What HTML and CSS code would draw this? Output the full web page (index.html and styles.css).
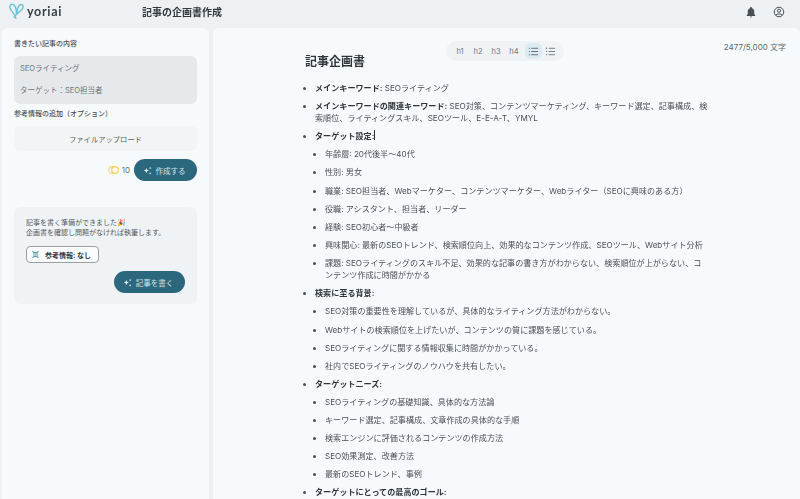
FILE: index.html
```html
<!DOCTYPE html>
<html lang="ja">
<head>
<meta charset="utf-8">
<title>記事の企画書作成</title>
<link rel="stylesheet" href="styles.css">
</head>
<body>
<header class="topbar">
  <div class="brand">
    <svg class="logo" viewBox="0 0 20 20" width="15" height="16" preserveAspectRatio="none"><path d="M9 19C8.500 14 2 10 1.200 5.500C.7 2.500 3.500 .5 6 2C9 4 10 9 10 14C10.500 9 12 4 15 2.200C17.500 .9 19.500 3 18.500 6C17 10.500 10 12.500 7 17.500" fill="none" stroke="#6cc3d5" stroke-width="1.900" stroke-linecap="round"/></svg>
    <span class="brand-name">yoriai</span>
  </div>
  <h1 class="page-title">記事の企画書作成</h1>
  <div class="top-icons">
    <svg viewBox="0 0 24 24" width="12" height="12"><path d="M12 2a2 2 0 0 0-2 2v.600C7 5.500 5.500 8 5.500 11v5L3.500 18.500V20h17v-1.500L18.500 16v-5c0-3-1.500-5.500-4.500-6.400V4a2 2 0 0 0-2-2zM10 21a2 2 0 0 0 4 0z" fill="#4a4f54"/></svg>
    <svg viewBox="0 0 24 24" width="12" height="12"><circle cx="12" cy="12" r="9.500" fill="none" stroke="#4a4f54" stroke-width="2"/><circle cx="12" cy="9.500" r="3.200" fill="none" stroke="#4a4f54" stroke-width="2"/><path d="M5.500 18.500c2-3.500 11-3.500 13 0" fill="none" stroke="#4a4f54" stroke-width="2"/></svg>
  </div>
</header>
<main class="workspace">
  <aside class="side">
    <div class="label">書きたい記事の内容</div>
    <div class="textarea">
      <p>SEOライティング</p>
      <p>ターゲット：SEO担当者</p>
    </div>
    <div class="label label-second">参考情報の追加（オプション）</div>
    <div class="upload">ファイルアップロード</div>
    <div class="action-row">
      <span class="credits">
        <svg viewBox="0 0 16 12" width="12" height="10"><circle cx="5.500" cy="6" r="4.500" fill="none" stroke="#f6d878" stroke-width="1.400"/><circle cx="9.500" cy="6" r="4.500" fill="#fbfaf0" stroke="#f4cf5c" stroke-width="1.600"/></svg>
        10
      </span>
      <button class="btn btn-create">
        <svg class="sparkle" viewBox="0 0 12 12" width="9" height="9"><path d="M4.500 2.500l1 2.500 2.500 1-2.500 1-1 2.500-1-2.500L1 6l2.500-1zM9.500 1l.5 1.200 1.200.5-1.200.5-.5 1.200L9 3.200l-1.200-.5L9 2.200zM9.500 8l.5 1.200 1.200.5-1.200.5-.5 1.200-.5-1.200-1.200-.5 1.200-.5z" fill="#e4eff2"/></svg>
        作成する
      </button>
    </div>
    <section class="ready">
      <p class="ready-text">記事を書く準備ができました🎉<br>企画書を確認し問題がなければ執筆します。</p>
      <div class="chip">
        <svg viewBox="0 0 12 12" width="9" height="9"><path d="M2 1.500L4 3.500H8L10 1.500M2 10.500L4 8.500H8L10 10.500M4 3.500V8.500M8 3.500V8.500" fill="none" stroke="#5d98a8" stroke-width="1.500"/><rect x="4" y="4" width="4" height="4" fill="#a9cdd6"/></svg>
        <b>参考情報: なし</b>
      </div>
      <div class="ready-action">
        <button class="btn btn-write">
          <svg class="sparkle" viewBox="0 0 12 12" width="9" height="9"><path d="M4.500 2.500l1 2.500 2.500 1-2.500 1-1 2.500-1-2.500L1 6l2.500-1zM9.500 1l.5 1.200 1.200.5-1.200.5-.5 1.200L9 3.200l-1.200-.5L9 2.200zM9.500 8l.5 1.200 1.200.5-1.200.5-.5 1.200-.5-1.200-1.200-.5 1.200-.5z" fill="#e4eff2"/></svg>
          記事を書く
        </button>
      </div>
    </section>
  </aside>
  <section class="doc">
    <div class="toolbar">
      <span>h1</span><span>h2</span><span>h3</span><span>h4</span>
      <span class="tool active"><svg viewBox="0 0 12 12" width="11" height="11"><path d="M3.500 2.500H11M3.500 6H11M3.500 9.500H11" stroke="#5b6a73" stroke-width="1"/><path d="M1 2.500H2.200M1 6H2.200M1 9.500H2.200" stroke="#5b6a73" stroke-width="1"/></svg></span>
      <span class="tool"><svg viewBox="0 0 12 12" width="11" height="11"><path d="M4 2.500H11M4 6H11M4 9.500H11" stroke="#6f7880" stroke-width="1"/><path d="M1.500 1.500V3.500M1 6H2.500M1 9.500H2.500" stroke="#6f7880" stroke-width="1"/></svg></span>
    </div>
    <div class="count">2477/5,000 文字</div>
    <article class="body">
      <h2>記事企画書</h2>
      <ul class="outer">
        <li><b>メインキーワード:</b> SEOライティング</li>
        <li><b>メインキーワードの関連キーワード:</b> SEO対策、コンテンツマーケティング、キーワード選定、記事構成、検索順位、ライティングスキル、SEOツール、E-E-A-T、YMYL</li>
        <li><b>ターゲット設定:</b><span class="caret"></span>
          <ul>
            <li>年齢層: 20代後半～40代</li>
            <li>性別: 男女</li>
            <li>職業: SEO担当者、Webマーケター、コンテンツマーケター、Webライター（SEOに興味のある方）</li>
            <li>役職: アシスタント、担当者、リーダー</li>
            <li>経験: SEO初心者～中級者</li>
            <li>興味関心: 最新のSEOトレンド、検索順位向上、効果的なコンテンツ作成、SEOツール、Webサイト分析</li>
            <li>課題: SEOライティングのスキル不足、効果的な記事の書き方がわからない、検索順位が上がらない、コンテンツ作成に時間がかかる</li>
          </ul>
        </li>
        <li><b>検索に至る背景:</b>
          <ul>
            <li>SEO対策の重要性を理解しているが、具体的なライティング方法がわからない。</li>
            <li>Webサイトの検索順位を上げたいが、コンテンツの質に課題を感じている。</li>
            <li>SEOライティングに関する情報収集に時間がかかっている。</li>
            <li>社内でSEOライティングのノウハウを共有したい。</li>
          </ul>
        </li>
        <li><b>ターゲットニーズ:</b>
          <ul>
            <li>SEOライティングの基礎知識、具体的な方法論</li>
            <li>キーワード選定、記事構成、文章作成の具体的な手順</li>
            <li>検索エンジンに評価されるコンテンツの作成方法</li>
            <li>SEO効果測定、改善方法</li>
            <li>最新のSEOトレンド、事例</li>
          </ul>
        </li>
        <li><b>ターゲットにとっての最高のゴール:</b></li>
      </ul>
    </article>
  </section>
</main>
</body>
</html>
```

FILE: styles.css
```css
* { box-sizing: border-box; }
html, body { margin: 0; height: 499px; overflow: hidden; }
body {
  background: #eef1f4;
  color: #4a4f54;
  font-family: "Inter", "Noto Sans CJK JP", sans-serif;
  font-size: 8.1px;
  display: flex;
  flex-direction: column;
  filter: blur(.35px);
}
.topbar { height: 28px; flex: none; display: flex; align-items: center; }
.brand { width: 142px; padding: 0 0 6px 9px; display: flex; align-items: center; gap: 3px; flex: none; }
.logo { flex: none; }
.brand-name { font-size: 12.500px; font-weight: 700; letter-spacing: .7px; color: #3a3f44; font-family: "Lato", "Inter", sans-serif; }
.page-title { margin: 0 0 6px; font-size: 10px; font-weight: 700; color: #33383c; flex: 1; }
.top-icons { display: flex; gap: 16px; padding: 0 15px 5px 0; }
.workspace { flex: 1; display: flex; gap: 4px; padding-left: 2px; min-height: 0; }
.side { width: 207px; flex: none; background: #f7fafd; border-radius: 6px 6px 0 0; padding: 11px 12px 0; }
.label { font-size: 7px; font-weight: 500; color: #4b5055; line-height: 10px; }
.label-second { margin-top: 5px; }
.textarea { margin-top: 7px; height: 48px; background: #e6e9ec; border-radius: 6px; padding: 7px 6px; color: #6e7378; font-size: 7.500px; }
.textarea p { margin: 0 0 10.500px; line-height: 11px; }
.upload { margin-top: 7px; height: 25px; background: #f2f4f6; border-radius: 6px; display: flex; align-items: center; justify-content: center; color: #5a5f64; font-size: 7.300px; }
.action-row { margin-top: 8px; display: flex; justify-content: flex-end; align-items: center; gap: 4px; }
.credits { display: flex; align-items: center; gap: 2px; color: #6a6f74; font-size: 8px; }
.btn { border: 0; background: #2c687d; color: #d5e3e8; border-radius: 11px; height: 22px; display: flex; align-items: center; justify-content: center; gap: 4px; padding: 0 3px 0 0; font: inherit; font-size: 7.500px; }
.btn-create { width: 63px; }
.btn-write { width: 71px; }
.ready { margin-top: 26px; height: 97px; background: #f0f3f6; border-radius: 6px; padding: 11px 12px; }
.ready-text { margin: 0; font-size: 7px; line-height: 10px; color: #55595e; }
.chip { margin-top: 8px; width: 73px; height: 17px; border: 1px solid #9a9fa3; border-radius: 4px; background: #fbfcfd; display: flex; align-items: center; gap: 5px; padding-left: 4px; font-size: 7px; color: #33383c; }
.ready-action { margin-top: 8px; display: flex; justify-content: flex-end; }
.doc { flex: 1; background: #f7fafd; border-radius: 6px 6px 0 0; position: relative; overflow: hidden; padding-left: 92px; }
.toolbar { position: absolute; left: 233px; top: 13px; width: 118px; height: 20px; border-radius: 10px; background: #f0f3f6; display: flex; align-items: center; padding-left: 5px; color: #71777d; font-size: 7.500px; }
.toolbar span { width: 18px; height: 16px; display: flex; align-items: center; justify-content: center; }
.toolbar .tool { width: 17px; }
.toolbar .active { background: #dcebf3; border-radius: 5px; margin-left: 2px; }
.count { position: absolute; right: 14px; top: 13px; font-size: 8px; color: #5f6469; }
.body { width: 403.500px; }
.body h2 { margin: 0; padding-top: 25px; font-size: 12px; line-height: 18px; font-weight: 700; color: #2f3438; }
.body ul { list-style: disc; margin: 0; padding: 0; }
.body .outer { margin-top: 10.800px; padding-left: 10px; }
.outer > li { margin-top: 5.800px; }
.outer li { line-height: 12.300px; }
.body .outer > li > ul { padding-left: 10px; margin-top: 5.800px; }
.outer > li > ul > li { margin-top: 5.800px; }
.outer b { font-weight: 700; color: #2f3438; }
.caret { display: inline-block; width: 1px; height: 10px; background: #333; vertical-align: -1px; }
```
